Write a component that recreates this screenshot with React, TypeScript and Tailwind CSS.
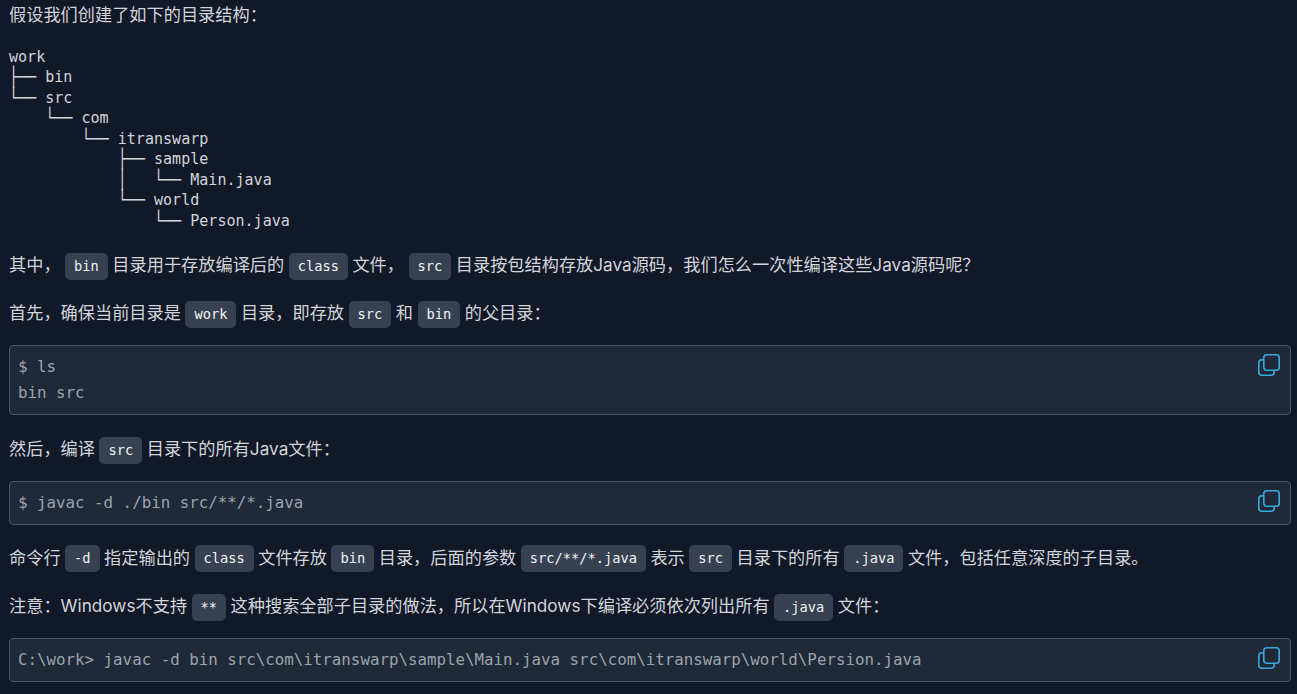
const sans = "font-['Inter','Noto_Sans_CJK_SC',sans-serif]";

function Code({ children }: { children: string }) {
  return (
    <code className="mx-[4.5px] inline-block rounded-[5px] bg-[#374151] px-[9px] font-['DejaVu_Sans_Mono',monospace] text-[13.7px] leading-[27px] font-medium text-[#f3f4f6] align-middle">
      {children}
    </code>
  );
}

function CopyIcon() {
  return (
    <svg width="24" height="24" viewBox="0 0 24 24" fill="none" stroke="#38a9dc" strokeWidth="1.6" className="absolute top-[7px] right-[9px]">
      <rect x="6.8" y="1.8" width="15.4" height="15.4" rx="3" />
      <path d="M6.8 6.8H4.8a3 3 0 0 0-3 3v9.4a3 3 0 0 0 3 3h9.4a3 3 0 0 0 3-3v-2" />
    </svg>
  );
}

function Block({ lines }: { lines: string[] }) {
  return (
    <div className="relative mt-[17px] rounded-[4px] border border-[#4b5563] bg-[#1f2937] px-[8px] py-[8px]">
      <pre className="font-['DejaVu_Sans_Mono',monospace] text-[15.8px] leading-[26px] text-[#9ca3af]">
        {lines.join("\n")}
      </pre>
      <CopyIcon />
    </div>
  );
}

const tree: [string, string, string][] = [
  ["", "", "work"],
  ["", "├──", " bin"],
  ["", "└──", " src"],
  ["    ", "└──", " com"],
  ["        ", "└──", " itranswarp"],
  ["            ", "├──", " sample"],
  ["            ", "│   └──", " Main.java"],
  ["            ", "└──", " world"],
  ["                ", "└──", " Person.java"],
];

export default function App() {
  return (
    <main className={`${sans} h-[694px] w-full overflow-hidden bg-[#111827] pr-[6px] pl-[9px] text-[17.2px] leading-[27px] text-[#d1d5db]`}>
      <p className="pt-[1px]">假设我们创建了如下的目录结构{"\uFF1A"}</p>
      <pre className="mt-[19px] font-['DejaVu_Sans_Mono',monospace] text-[15.06px] leading-[20.45px] text-[#d1d5db]">
        {tree.map(([indent, branch, name]) => (
          <div key={name}>
            {indent}
            <span className="inline-block origin-center scale-y-[1.25]">{branch}</span>
            {name}
          </div>
        ))}
      </pre>
      <p className="mt-[20px]">
        其中{"\uFF0C"}<Code>bin</Code>目录用于存放编译后的<Code>class</Code>文件{"\uFF0C"}<Code>src</Code>目录按包结构存放Java源码{"\uFF0C"}我们怎么一次性编译这些Java源码呢{"\uFF1F"}
      </p>
      <p className="mt-[19px]">
        首先{"\uFF0C"}确保当前目录是<Code>work</Code>目录{"\uFF0C"}即存放<Code>src</Code>和<Code>bin</Code>的父目录{"\uFF1A"}
      </p>
      <Block lines={["$ ls", "bin src"]} />
      <p className="mt-[20px]">
        然后{"\uFF0C"}编译<Code>src</Code>目录下的所有Java文件{"\uFF1A"}
      </p>
      <Block lines={["$ javac -d ./bin src/**/*.java"]} />
      <p className="mt-[19px]">
        命令行<Code>-d</Code>指定输出的<Code>class</Code>文件存放<Code>bin</Code>目录{"\uFF0C"}后面的参数<Code>src/**/*.java</Code>表示<Code>src</Code>目录下的所有<Code>.java</Code>文件{"\uFF0C"}包括任意深度的子目录。
      </p>
      <p className="mt-[20px]">
        注意{"\uFF1A"}Windows不支持<Code>**</Code>这种搜索全部子目录的做法{"\uFF0C"}所以在Windows下编译必须依次列出所有<Code>.java</Code>文件{"\uFF1A"}
      </p>
      <Block lines={["C:\\work> javac -d bin src\\com\\itranswarp\\sample\\Main.java src\\com\\itranswarp\\world\\Persion.java"]} />
    </main>
  );
}
